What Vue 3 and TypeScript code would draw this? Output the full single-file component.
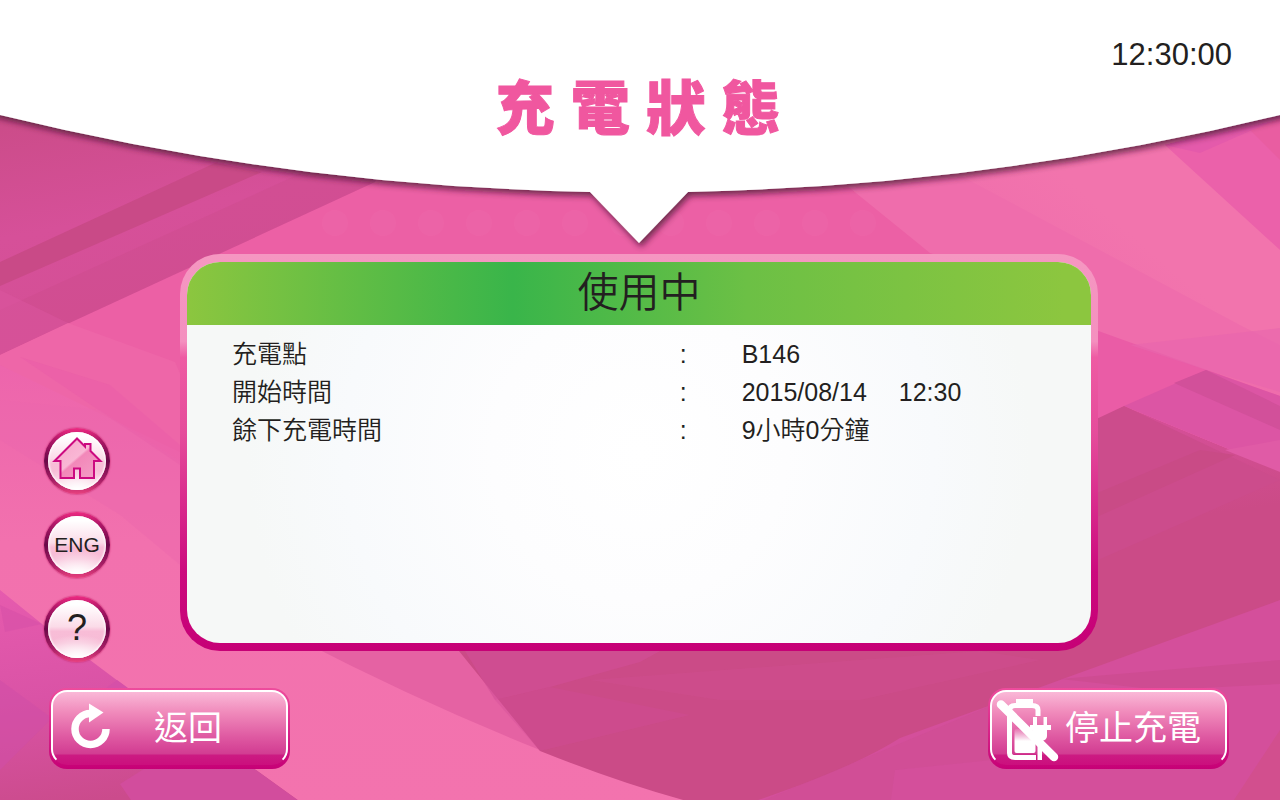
<script setup lang="ts">
interface StatusRow {
  label: string
  values: string[]
}

const clock = '12:30:00'

const rows: StatusRow[] = [
  { label: '充電點', values: ['B146'] },
  { label: '開始時間', values: ['2015/08/14', '12:30'] },
  { label: '餘下充電時間', values: ['9小時0分鐘'] },
]

const dots: number[] = Array.from({ length: 12 }, (_, i) => 335 + i * 48)
</script>

<template>
  <main class="screen">
    <svg class="backdrop" viewBox="0 0 1280 800" preserveAspectRatio="none" aria-hidden="true">
      <defs>
        <linearGradient id="topLeft" x1="0" y1="0" x2="0.3" y2="1">
          <stop offset="0" stop-color="#c94b86" />
          <stop offset="0.5" stop-color="#d65099" />
          <stop offset="1" stop-color="#d34f94" />
        </linearGradient>
        <linearGradient id="bottomLeft" x1="0" y1="0" x2="0.2" y2="1">
          <stop offset="0" stop-color="#e65bae" />
          <stop offset="0.5" stop-color="#da53a6" />
          <stop offset="1" stop-color="#cb4b8c" />
        </linearGradient>
        <linearGradient id="rightDark" x1="0" y1="0" x2="0.3" y2="1">
          <stop offset="0" stop-color="#cb4c8a" />
          <stop offset="0.3" stop-color="#d44f96" />
          <stop offset="0.5" stop-color="#cb4b87" />
          <stop offset="1" stop-color="#cb4b87" />
        </linearGradient>
        <linearGradient id="lightLeft" x1="0" y1="0" x2="0" y2="1">
          <stop offset="0" stop-color="#ed65ac" />
          <stop offset="0.4" stop-color="#f271ae" />
          <stop offset="1" stop-color="#f373ae" />
        </linearGradient>
        <linearGradient id="glow" x1="0" y1="0.6" x2="0.6" y2="0.1">
          <stop offset="0" stop-color="#f273ad" stop-opacity="0" />
          <stop offset="0.6" stop-color="#f274ad" />
        </linearGradient>
        <filter id="curveShadow" x="-5%" y="-5%" width="110%" height="120%">
          <feDropShadow dx="2" dy="4" stdDeviation="3" flood-color="#3d0a2a" flood-opacity="0.7" />
        </filter>
      </defs>

      <rect width="1280" height="800" fill="#ec60a5" />

      <polygon points="0,100 420,100 375,182 0,355" fill="url(#topLeft)" />
      <polygon points="0,262 215,163 262,172 0,286" fill="#c94a87" />
      <polygon points="0,310 330,160 375,182 0,355" fill="#cb4b8a" opacity="0.35" />
      <polygon points="0,290 68,323 0,355" fill="#dc56a0" opacity="0.5" />

      <polygon points="68,323 175,362 200,420 200,470 0,365 0,355" fill="#ee66a8" />
      <polygon points="0,365 200,462 480,640 700,806 0,806" fill="url(#lightLeft)" />
      <polygon points="20,357 110,385 180,445 180,465" fill="#ea5ca8" opacity="0.5" />
      <polygon points="0,440 120,515 210,590 210,480 100,410 0,400" fill="#ec66ac" opacity="0.4" />

      <polygon points="0,590 42,624 130,690 256,770 306,806 0,806" fill="url(#bottomLeft)" />
      <polygon points="0,680 52,718 0,770" fill="#d14fa6" opacity="0.6" />
      <polygon points="0,605 42,624 5,632" fill="#d951a8" opacity="0.7" />
      <polygon points="106,688 117,680 128,688" fill="#d650a8" />
      <polygon points="120,784 190,740 256,770 306,806 135,806" fill="#d24d9d" />

      <path d="M300,640 H1280 V806 H706 Q630,785 540,750 Q420,702 300,640Z" fill="#e562a3" />
      <path d="M450,640 L1060,640 V436 L1124,406 L1280,470 V806 H706 Q630,787 540,751Z" fill="url(#rightDark)" />
      <polygon points="465,651 680,640 640,662 550,687 495,700" fill="#d24e98" opacity="0.6" />
      <polygon points="495,700 550,687 690,715 540,751" fill="#d24e98" opacity="0.35" />
      <polygon points="590,680 980,651 1040,660 860,700 720,700" fill="#d24f92" opacity="0.35" />

      <polygon points="840,180 1280,90 1280,405 1124,406 1098,420 1080,300 930,253" fill="#ef6dac" />
      <polygon points="1165,145 1280,110 1280,345 1240,325 950,170" fill="url(#glow)" />
      <polygon points="1165,145 1280,110 1280,250" fill="#eb61aa" />
      <polygon points="1245,125 1280,110 1280,160" fill="#e95da1" />
      <polygon points="1165,145 1280,110 1280,118 1200,153" fill="#e45aab" />
      <polygon points="1090,328 1280,396 1280,470 1124,406 1090,424" fill="#ea5ca6" />
      <polygon points="1130,345 1280,328 1280,392 1206,370" fill="#e865ae" opacity="0.6" />
      <polygon points="1124,406 1206,370 1280,396 1280,470" fill="#dc55a4" />
      <polygon points="1174,383 1206,370 1280,406 1280,430" fill="#d2509a" />
      <polygon points="1090,422 1124,406 1280,480 1098,560" fill="#cc4c8c" />
      <polygon points="1090,496 1200,450 1235,455 1090,520" fill="#c94b86" />
      <polygon points="1225,450 1280,440 1280,472" fill="#e05ba6" />

      <path d="M1280,600 L1060,680 L900,738 Q850,770 740,806 H1280Z" fill="#d44f9b" />
      <polygon points="1060,679 1280,660 1280,684 1160,690" fill="#ce4c92" />
      <polygon points="750,806 990,706 1160,690 1040,755 895,770 890,806" fill="#ce4d92" opacity="0.5" />
      <polygon points="1230,806 1280,730 1280,806" fill="#d24f8e" />

      <g fill="#f073b0" opacity="0.2">
        <circle v-for="x in dots" :key="x" :cx="x" cy="223" r="13" />
      </g>

      <path
        d="M-20,-20 H1300 V109 L1280,115 Q988,186 688,192 L639,243 L590,192 Q290,186 0,115 L-20,109Z"
        fill="#ffffff"
        filter="url(#curveShadow)"
      />
    </svg>

    <header class="top">
      <time class="clock">{{ clock }}</time>
      <h1 class="title">充 電 狀 態</h1>
    </header>

    <div class="middle">
      <nav class="rail" aria-label="功能">
        <button type="button" class="round" aria-label="主頁">
          <svg class="house" viewBox="0 0 66 66" aria-hidden="true">
            <defs>
              <linearGradient id="houseFill" x1="0" y1="0" x2="1" y2="1">
                <stop offset="0" stop-color="#f6a3c8" />
                <stop offset="0.48" stop-color="#f9b7d5" />
                <stop offset="0.52" stop-color="#f288b9" />
                <stop offset="1" stop-color="#f4a0c8" />
              </linearGradient>
            </defs>
            <path
              d="M33,10.5 L10.5,33 H16.5 V50 H30 V40.5 H36 V50 H50 V33 H56.5 L46.5,23 V16 H41 V18.5Z"
              fill="url(#houseFill)"
              stroke="#cc0a80"
              stroke-width="2"
            />
          </svg>
        </button>
        <button type="button" class="round eng">ENG</button>
        <button type="button" class="round help">?</button>
      </nav>

      <section class="panel">
        <div class="sheet">
          <h2 class="state">使用中</h2>
          <table class="details">
            <tbody>
              <tr v-for="row in rows" :key="row.label">
                <th scope="row">{{ row.label }}</th>
                <td class="colon">:</td>
                <td>
                  <div class="values">
                    <span v-for="value in row.values" :key="value">{{ value }}</span>
                  </div>
                </td>
              </tr>
            </tbody>
          </table>
        </div>
      </section>
    </div>

    <footer class="actions">
      <button type="button" class="action back">
        <svg class="icon" viewBox="0 0 60 66" aria-hidden="true">
          <path d="M51,34 A15.5,15.5 0 1 1 35.5,18.5" fill="none" stroke="#fff" stroke-width="7.5" />
          <path d="M34,8.5 L48.5,17.5 L34,27.5Z" fill="#fff" />
        </svg>
        <span>返回</span>
      </button>
      <button type="button" class="action stop">
        <svg class="icon" viewBox="0 0 60 66" aria-hidden="true">
          <defs>
            <linearGradient id="charge" x1="0" y1="0" x2="0" y2="1">
              <stop offset="0" stop-color="#fff" stop-opacity="0.1" />
              <stop offset="0.5" stop-color="#fff" />
            </linearGradient>
          </defs>
          <rect x="22" y="4" width="17" height="6" fill="#fff" />
          <path
            d="M44,21 V15 Q44,10.5 38,10.5 H21 Q15.5,10.5 15.5,16 V58 Q15.5,62.5 21,62.5 H42"
            fill="none"
            stroke="#fff"
            stroke-width="5"
          />
          <rect x="20.5" y="34" width="21" height="24" rx="2" fill="url(#charge)" />
          <path
            d="M39,22 V30 H36 V35 H39 V41 Q39,45 43.5,46 V65 H48 V46 Q53,45 53,41 V35 H57 V30 H53 V22 H49.5 V30 H43 V22Z"
            fill="#fff"
          />
          <path d="M7,9.5 L60,62" stroke="#fff" stroke-width="8.5" stroke-linecap="round" />
        </svg>
        <span>停止充電</span>
      </button>
    </footer>
  </main>
</template>

<style>
body {
  margin: 0;
}
</style>

<style scoped>
.screen {
  position: relative;
  display: grid;
  grid-template-rows: auto 1fr auto;
  min-height: 100vh;
  overflow: hidden;
  color: #231f20;
  font-family: 'Liberation Sans', 'Noto Sans CJK TC', sans-serif;
}

.screen *,
.screen {
  box-sizing: border-box;
}

.backdrop {
  position: absolute;
  inset: 0;
  width: 100%;
  height: 100%;
}

.top,
.middle,
.actions {
  position: relative;
}

.top {
  display: flex;
  flex-direction: column;
  padding: 35px 48px 108px 44px;
}

.clock {
  align-self: flex-end;
  font-size: 31px;
  line-height: 39px;
}

.title {
  margin: 0;
  color: #f0579f;
  font-size: 59px;
  font-weight: 900;
  line-height: 72px;
  text-align: center;
  -webkit-text-stroke: 1px #f0579f;
}

.middle {
  display: grid;
  grid-template-columns: 180px 1fr;
  padding-right: 182px;
}

.rail {
  display: flex;
  flex-direction: column;
  gap: 18px;
  align-self: end;
  padding-left: 44px;
}

.round {
  display: flex;
  align-items: center;
  justify-content: center;
  width: 66px;
  height: 66px;
  padding: 0;
  border: 4px solid transparent;
  border-radius: 50%;
  background:
    radial-gradient(ellipse 70% 40% at 50% 100%, #ffffff 5%, rgba(255, 255, 255, 0) 100%) padding-box,
    linear-gradient(#ffffff 8%, #fbdbe8 46%, #f8bdd7 54%, #f7bcd6 75%, #fbdde9 100%) padding-box,
    linear-gradient(#ee2a82 0%, #b01868 18%, #6a0848 50%, #a81f66 80%, #e8407f 100%) border-box;
  box-shadow:
    inset 0 0 2px 1px #ffffff,
    0 0 1px 1px rgba(205, 50, 120, 0.5);
  color: #231f20;
  font-family: inherit;
}

.eng {
  font-size: 21px;
}

.help {
  padding-bottom: 2px;
  font-size: 36px;
}

.house {
  flex: none;
  width: 66px;
  height: 66px;
}

.panel {
  margin-bottom: 11px;
  padding: 8px 7px;
  border-radius: 40px;
  background: linear-gradient(#f597c1 0%, #f490bf 22%, #ee5ba3 26%, #e54c9b 45%, #cc0a7e 80%, #c60076 100%);
}

.sheet {
  height: 100%;
  overflow: hidden;
  border-radius: 33px;
  background: radial-gradient(circle at 50% 50%, #ffffff 0%, #fdfdfe 30%, #f8fafc 60%, #f6f8f7 80%);
}

.state {
  margin: 0;
  background: linear-gradient(90deg, #8cc63f 0%, #39b54a 36%, #6cc045 62%, #8cc63f 97%);
  font-size: 41px;
  font-weight: 350;
  line-height: 63px;
  text-align: center;
}

.details {
  width: calc(100% - 90px);
  margin: 10px 45px 0;
  border-collapse: collapse;
  table-layout: fixed;
  font-size: 25px;
  font-weight: 350;
}

.details th,
.details td {
  height: 38px;
  padding: 0;
  font-weight: inherit;
  line-height: 38px;
  text-align: left;
}

.details th {
  width: 55%;
}

.details .colon {
  width: 62px;
}

.values {
  display: flex;
  gap: 32px;
}

.actions {
  display: flex;
  justify-content: space-between;
  padding: 26px 51px 31px 49px;
}

.action {
  position: relative;
  display: flex;
  align-items: center;
  width: 241px;
  height: 81px;
  padding: 0 6px 2px;
  border: 0;
  border-radius: 18px;
  background: linear-gradient(#ee4c9d, #c60076);
  color: #ffffff;
  font-family: inherit;
  font-size: 34px;
  line-height: 48px;
}

.action::before {
  content: '';
  position: absolute;
  inset: 2px 2px 4px;
  border: 2px solid #ffffff;
  border-bottom-color: transparent;
  border-radius: 16px;
  background: linear-gradient(#fbbdda 0%, #f08abb 30%, #df5aa2 62%, #d23c92 85%, #cc1a82 87%, #cb0f7d 100%) border-box;
}

.icon,
.action span {
  position: relative;
}

.icon {
  flex: none;
  width: 60px;
  height: 66px;
  overflow: visible;
}

.back span {
  margin-left: 39px;
}

.stop span {
  margin-left: 11px;
}
</style>
